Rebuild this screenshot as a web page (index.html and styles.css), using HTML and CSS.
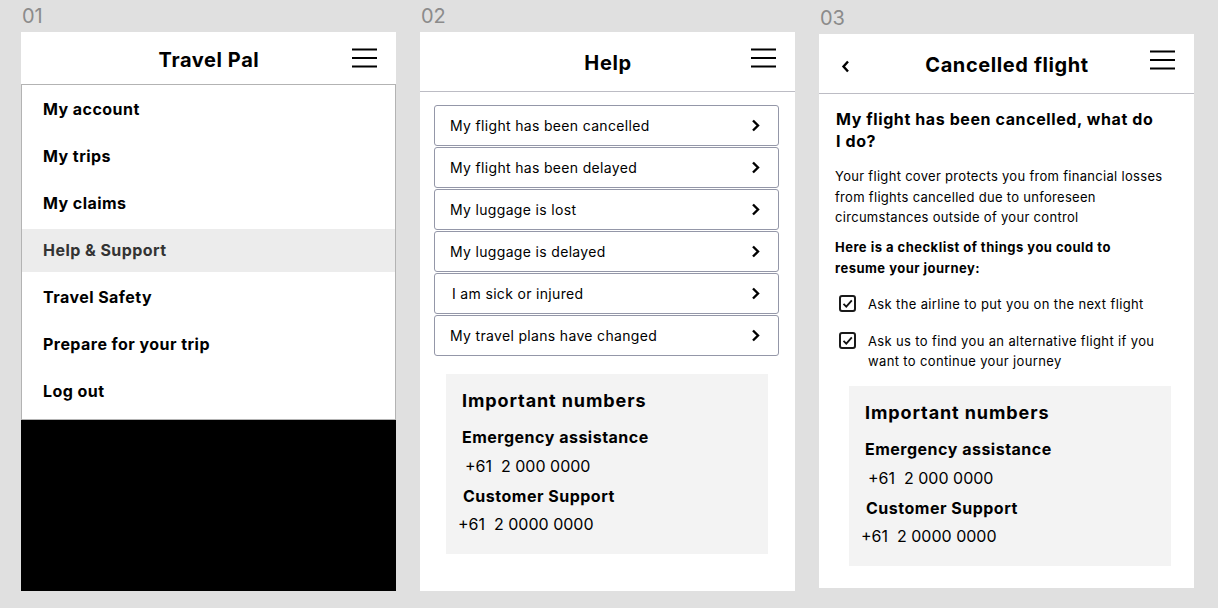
FILE: index.html
```html
<!DOCTYPE html>
<html lang="en">
<head>
<meta charset="utf-8">
<title>Travel Pal screens</title>
<link rel="stylesheet" href="styles.css">
</head>
<body>
<main class="board">
  <section class="col">
    <div class="label">01</div>
    <div class="frame frame-menu">
      <header class="bar bar-short">
        <span class="bar-left"></span>
        <h1 class="title title-1">Travel Pal</h1>
        <span class="burger"><svg width="25" height="20" viewBox="0 0 25 20"><path d="M0 1.5H25M0 10H25M0 18.5H25" stroke="#000" stroke-width="2.2" fill="none"/></svg></span>
      </header>
      <nav class="menu">
        <a class="menu-item">My account</a>
        <a class="menu-item">My trips</a>
        <a class="menu-item">My claims</a>
        <a class="menu-item is-active">Help &amp; Support</a>
        <a class="menu-item">Travel Safety</a>
        <a class="menu-item">Prepare for your trip</a>
        <a class="menu-item">Log out</a>
      </nav>
      <div class="scrim"></div>
    </div>
  </section>

  <section class="col">
    <div class="label">02</div>
    <div class="frame">
      <header class="bar bar-tall">
        <span class="bar-left"></span>
        <h1 class="title title-2">Help</h1>
        <span class="burger"><svg width="25" height="20" viewBox="0 0 25 20"><path d="M0 1.5H25M0 10H25M0 18.5H25" stroke="#000" stroke-width="2.2" fill="none"/></svg></span>
      </header>
      <div class="help-body">
        <ul class="topics">
          <li class="topic"><span>My flight has been cancelled</span><svg class="chev" width="9" height="13" viewBox="0 0 9 13"><path d="M2 1.5L7 6.5L2 11.5" stroke="#000" stroke-width="2.4" fill="none"/></svg></li>
          <li class="topic"><span>My flight has been delayed</span><svg class="chev" width="9" height="13" viewBox="0 0 9 13"><path d="M2 1.5L7 6.5L2 11.5" stroke="#000" stroke-width="2.4" fill="none"/></svg></li>
          <li class="topic"><span>My luggage is lost</span><svg class="chev" width="9" height="13" viewBox="0 0 9 13"><path d="M2 1.5L7 6.5L2 11.5" stroke="#000" stroke-width="2.4" fill="none"/></svg></li>
          <li class="topic"><span>My luggage is delayed</span><svg class="chev" width="9" height="13" viewBox="0 0 9 13"><path d="M2 1.5L7 6.5L2 11.5" stroke="#000" stroke-width="2.4" fill="none"/></svg></li>
          <li class="topic"><span class="nudge">I am sick or injured</span><svg class="chev" width="9" height="13" viewBox="0 0 9 13"><path d="M2 1.5L7 6.5L2 11.5" stroke="#000" stroke-width="2.4" fill="none"/></svg></li>
          <li class="topic"><span>My travel plans have changed</span><svg class="chev" width="9" height="13" viewBox="0 0 9 13"><path d="M2 1.5L7 6.5L2 11.5" stroke="#000" stroke-width="2.4" fill="none"/></svg></li>
        </ul>
        <div class="numbers numbers-help">
          <h2 class="numbers-title">Important numbers</h2>
          <h3 class="numbers-head head-1">Emergency assistance</h3>
          <p class="numbers-phone phone-1">+61&nbsp; 2 000 0000</p>
          <h3 class="numbers-head head-2">Customer Support</h3>
          <p class="numbers-phone phone-2">+61&nbsp; 2 0000 0000</p>
        </div>
      </div>
    </div>
  </section>

  <section class="col">
    <div class="label label-3">03</div>
    <div class="frame frame-detail">
      <header class="bar bar-tall">
        <span class="bar-left"><svg class="back" width="9" height="13" viewBox="0 0 9 13"><path d="M7 1.5L2.5 6.5L7 11.5" stroke="#000" stroke-width="2.4" fill="none"/></svg></span>
        <h1 class="title title-3">Cancelled flight</h1>
        <span class="burger"><svg width="25" height="20" viewBox="0 0 25 20"><path d="M0 1.5H25M0 10H25M0 18.5H25" stroke="#000" stroke-width="2.2" fill="none"/></svg></span>
      </header>
      <div class="detail-body">
        <h2 class="detail-heading">My flight has been cancelled, what do<br>I do?</h2>
        <p class="detail-text">Your flight cover protects you from financial losses<br>from flights cancelled due to unforeseen<br>circumstances outside of your control</p>
        <p class="detail-lead">Here is a checklist of things you could to<br>resume your journey:</p>
        <ul class="checklist">
          <li class="check-item"><span class="box"><svg width="13" height="13" viewBox="0 0 13 13"><path d="M2.5 6.8L5.3 9.6L10.8 3.4" stroke="#111" stroke-width="1.8" fill="none"/></svg></span><span>Ask the airline to put you on the next flight</span></li>
          <li class="check-item item-2"><span class="box"><svg width="13" height="13" viewBox="0 0 13 13"><path d="M2.5 6.8L5.3 9.6L10.8 3.4" stroke="#111" stroke-width="1.8" fill="none"/></svg></span><span>Ask us to find you an alternative flight if you<br>want to continue your journey</span></li>
        </ul>
        <div class="numbers numbers-detail">
          <h2 class="numbers-title">Important numbers</h2>
          <h3 class="numbers-head head-1">Emergency assistance</h3>
          <p class="numbers-phone phone-1">+61&nbsp; 2 000 0000</p>
          <h3 class="numbers-head head-2">Customer Support</h3>
          <p class="numbers-phone phone-2">+61&nbsp; 2 0000 0000</p>
        </div>
      </div>
    </div>
  </section>
</main>
</body>
</html>
```

FILE: styles.css
```css
* { box-sizing: border-box; }

html, body {
  margin: 0;
  padding: 0;
  background: #e0e0e0;
  font-family: Inter, "Noto Sans", "Liberation Sans", sans-serif;
  color: #000;
}

h1, h2, h3, p, ul { margin: 0; padding: 0; }
ul { list-style: none; }

.board {
  display: flex;
  gap: 24px;
  padding-left: 21px;
  height: 608px;
  overflow: hidden;
}

.col {
  width: 375px;
  display: flex;
  flex-direction: column;
}

.label {
  height: 32px;
  line-height: 32px;
  font-size: 20px;
  color: #8b8b8b;
  padding-left: 1px;
}

.label-3 {
  height: 34px;
  line-height: 31px;
  padding-top: 3px;
}

.frame {
  background: #fff;
  height: 559px;
  display: flex;
  flex-direction: column;
}

.frame-detail { height: 554px; }

/* header bar */
.bar {
  display: grid;
  grid-template-columns: 1fr auto 1fr;
  align-items: start;
  padding: 16px 19px 0 20px;
}

.bar-short { height: 52px; }
.bar-tall { height: 60px; border-bottom: 1px solid #bcbcc4; }

.bar-left { display: flex; }

.title {
  font-size: 20px;
  font-weight: 700;
  line-height: 24px;
  letter-spacing: 0.6px;
}

.title-1 { padding-top: 0; }
.title-2 { padding-top: 3px; }
.title-3 { padding-top: 3px; }

.back { margin-top: 10px; margin-left: 2px; }

.burger {
  justify-self: end;
  display: flex;
}

/* menu (screen 1) */
.menu {
  border: 1px solid #b3b3b3;
  padding: 3px 0 6px;
  display: flex;
  flex-direction: column;
  gap: 4px;
}

.menu-item {
  height: 43px;
  line-height: 43px;
  padding-left: 21px;
  font-size: 16px;
  font-weight: 700;
  letter-spacing: 0.45px;
  color: #000;
}

.menu-item.is-active {
  background: #ececec;
  color: #333;
}

.scrim {
  flex: 1;
  background: #000;
}

/* help (screen 2) */
.help-body {
  padding: 13px 16px 0 14px;
}

.topics {
  display: flex;
  flex-direction: column;
  gap: 1px;
}

.topic {
  height: 41px;
  border: 1px solid #9497a8;
  border-radius: 3px;
  display: flex;
  align-items: center;
  justify-content: space-between;
  padding: 0 18px 0 15px;
  font-size: 14px;
  letter-spacing: 0.33px;
}

.nudge { padding-left: 2px; }

.numbers {
  background: #f3f3f3;
  width: 322px;
  height: 180px;
  padding: 15px 0 0 16px;
}

.numbers-help { margin: 18px 0 0 12px; }
.numbers-detail { margin: 15px 0 0 14px; }

.numbers-title {
  font-size: 18px;
  font-weight: 700;
  line-height: 24px;
  letter-spacing: 0.9px;
}

.numbers-head {
  font-size: 16px;
  font-weight: 700;
  line-height: 22px;
  letter-spacing: 0.5px;
}

.numbers-phone {
  font-size: 16px;
  line-height: 22px;
}

.head-1 { margin-top: 13px; }
.phone-1 { margin-top: 7px; padding-left: 3px; }
.head-2 { margin-top: 8px; padding-left: 1px; }
.phone-2 { margin-top: 6px; margin-left: -4px; }

/* detail (screen 3) */
.detail-body {
  padding: 14px 16px 0 16px;
}

.detail-heading {
  font-size: 16px;
  font-weight: 700;
  line-height: 22px;
  letter-spacing: 0.6px;
  padding-left: 1px;
}

.detail-text {
  margin-top: 14px;
  font-size: 13px;
  line-height: 20.5px;
  letter-spacing: 0.3px;
}

.detail-lead {
  margin-top: 9px;
  font-size: 13px;
  font-weight: 700;
  line-height: 21px;
  letter-spacing: 0.48px;
}

.checklist {
  margin-top: 15px;
}

.check-item {
  display: flex;
  align-items: flex-start;
  gap: 12px;
  font-size: 13px;
  line-height: 20px;
  letter-spacing: 0.36px;
  padding-left: 4px;
}

.item-2 { margin-top: 17px; }

.box {
  width: 17px;
  height: 17px;
  margin-top: 1px;
  border: 2px solid #1a1a1a;
  border-radius: 3px;
  display: flex;
  align-items: center;
  justify-content: center;
  flex: none;
}
```
